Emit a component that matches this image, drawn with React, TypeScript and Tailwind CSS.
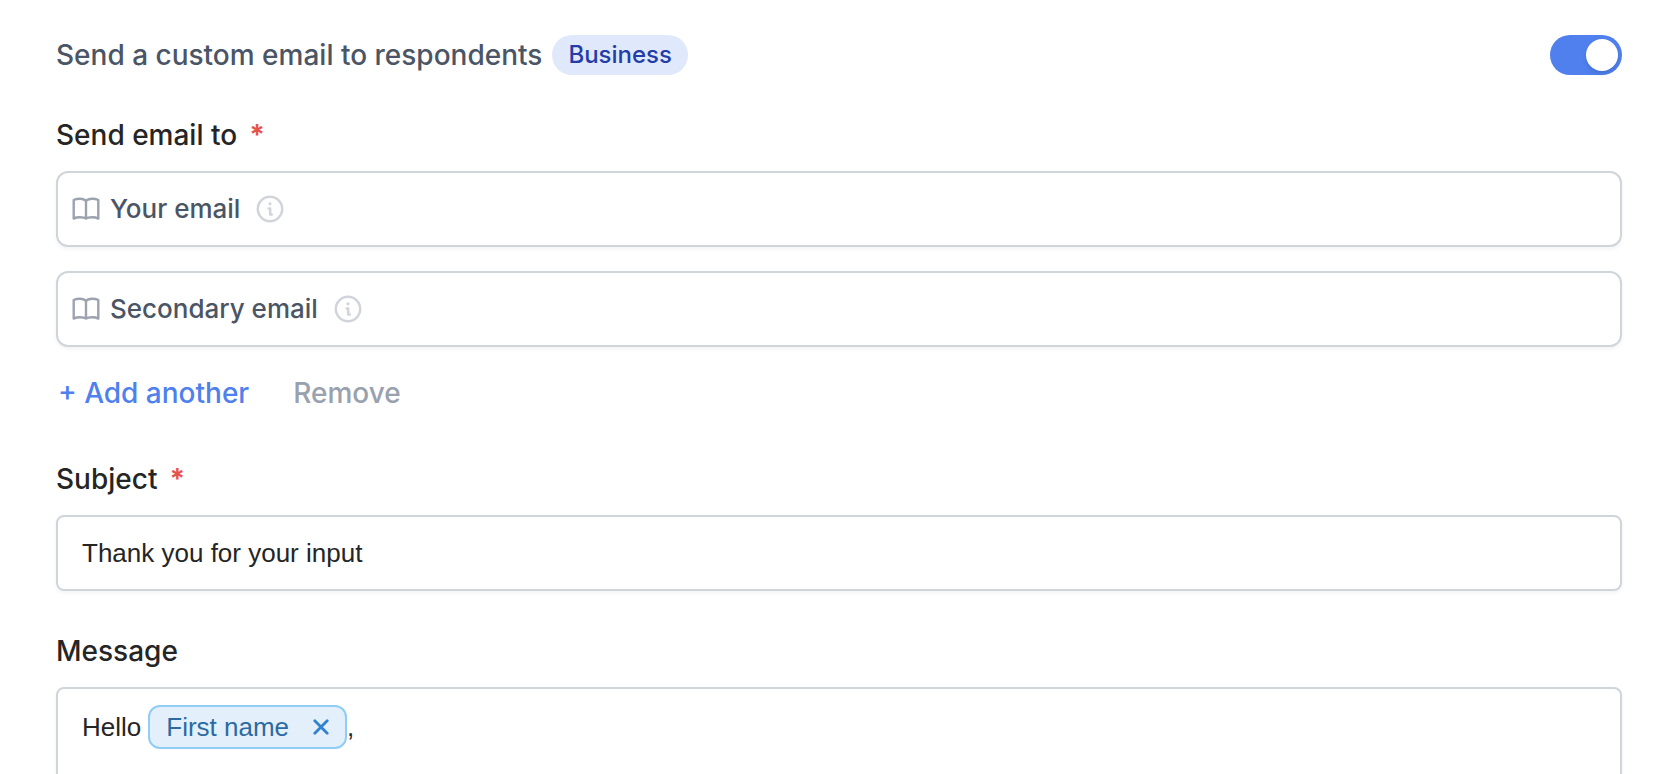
import { useState } from "react";

const inter = "font-['Inter',sans-serif]";
const arial = "font-['Liberation_Sans',Arial,sans-serif]";

function BookIcon() {
  return (
    <svg width="28" height="24" viewBox="0 0 28 24" fill="none" stroke="#9ca3af" strokeWidth="2.4" strokeLinejoin="round" strokeLinecap="round" aria-hidden="true">
      <path d="M14 4C12.6 2.3 10.5 1.7 8 1.7C5.4 1.7 3.4 2.1 1.7 3V21.6C3.4 20.7 5.4 20.3 8 20.3C10.5 20.3 12.6 20.6 14 21.6C15.4 20.6 17.5 20.3 20 20.3C22.6 20.3 24.6 20.7 26.3 21.6V3C24.6 2.1 22.6 1.7 20 1.7C17.5 1.7 15.4 2.3 14 4ZM14 4V21.6" />
    </svg>
  );
}

function InfoIcon() {
  return (
    <svg width="28" height="28" viewBox="0 0 28 28" fill="none" stroke="#d1d5db" strokeWidth="2.5" strokeLinecap="round" strokeLinejoin="round" aria-hidden="true">
      <circle cx="14" cy="14" r="12.2" />
      <circle cx="14" cy="8.8" r="1.6" fill="#d1d5db" stroke="none" />
      <path d="M12.6 13.6H14.2V19.4H15.8" />
    </svg>
  );
}

function CloseIcon() {
  return (
    <svg width="16" height="16" viewBox="0 0 16 16" fill="none" stroke="#3182ce" strokeWidth="2.8" strokeLinecap="round" aria-hidden="true">
      <path d="M1.8 1.8L14.2 14.2M14.2 1.8L1.8 14.2" />
    </svg>
  );
}

function Required() {
  return <span className="ml-3 font-bold text-[#e5534b]">*</span>;
}

function RecipientField({ name }: { name: string }) {
  return (
    <button
      type="button"
      aria-haspopup="listbox"
      className="flex h-[76px] w-full items-center rounded-xl border-2 border-[#d0d5da] bg-white px-[14px] text-left text-[26px] leading-9 font-medium text-gray-600 shadow-[0_2px_4px_rgba(0,0,0,0.05)]"
    >
      <BookIcon />
      <span className="mr-4 ml-[10px]">{name}</span>
      <InfoIcon />
    </button>
  );
}

export default function App() {
  const [enabled, setEnabled] = useState(true);
  const [subject, setSubject] = useState("Thank you for your input");
  const [recipients, setRecipients] = useState(["Your email", "Secondary email"]);

  return (
    <main className={`${inter} flex h-screen flex-col overflow-hidden bg-white pt-[35px] pr-[52px] pl-14 text-[28px] leading-10 font-medium text-[#252525]`}>
      <div className="flex shrink-0 items-center justify-between">
        <div className="flex items-center gap-[10px]">
          <label htmlFor="custom-email" className="text-gray-600">
            Send a custom email to respondents
          </label>
          <span className="rounded-full bg-[#dfe9fb] px-4 text-[24px] text-[#233caa]">Business</span>
        </div>
        <input
          id="custom-email"
          type="checkbox"
          role="switch"
          checked={enabled}
          onChange={(e) => setEnabled(e.target.checked)}
          className="flex h-10 w-[72px] appearance-none items-center rounded-full bg-gray-300 px-1 before:size-8 before:rounded-full before:bg-white before:shadow-md checked:justify-end checked:bg-[#4f80ee]"
        />
      </div>

      <fieldset className="mt-10 shrink-0">
        <legend>
          Send email to
          <Required />
        </legend>
        <div className="mt-4 flex flex-col gap-6">
          {recipients.map((name, i) => (
            <RecipientField key={i} name={name} />
          ))}
        </div>
        <div className="mt-[26px] flex gap-11 px-[2px]">
          <button type="button" className="text-[#4f80ee]" onClick={() => setRecipients([...recipients, "Your email"])}>
            + Add another
          </button>
          <button type="button" className="text-gray-400" onClick={() => setRecipients(recipients.slice(0, -1))}>
            Remove
          </button>
        </div>
      </fieldset>

      <div className="mt-[46px] flex shrink-0 flex-col gap-4">
        <label htmlFor="subject">
          Subject
          <Required />
        </label>
        <input
          id="subject"
          required
          value={subject}
          onChange={(e) => setSubject(e.target.value)}
          className={`${arial} h-[76px] w-full rounded-lg border-2 border-[#d0d5da] px-6 text-[26px] font-normal shadow-[0_2px_4px_rgba(0,0,0,0.05)]`}
        />
      </div>

      <div className="mt-10 flex shrink-0 flex-col gap-4">
        <span id="message-label">Message</span>
        <div
          role="textbox"
          aria-multiline="true"
          aria-labelledby="message-label"
          className={`${arial} min-h-80 rounded-lg border-2 border-[#d0d5da] px-6 py-4 text-[26px] font-normal shadow-[0_2px_4px_rgba(0,0,0,0.05)]`}
        >
          <p className="flex items-center">
            <span>Hello</span>
            <span className="ml-[7px] flex items-center gap-6 rounded-xl border-2 border-[#90cdf4] bg-[#e3f0fb] px-4 text-[#2c6aa3]">
              First name
              <button type="button" aria-label="Remove First name">
                <CloseIcon />
              </button>
            </span>
            <span>,</span>
          </p>
        </div>
      </div>
    </main>
  );
}
